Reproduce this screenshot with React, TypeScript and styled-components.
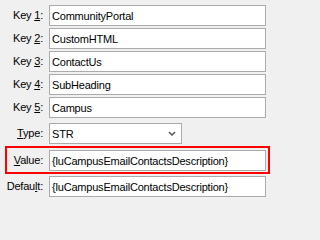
import React from 'react';
import styled, { createGlobalStyle } from 'styled-components';

const GlobalStyle = createGlobalStyle`
  html, body {
    margin: 0;
    padding: 0;
    background: #f0f0f0;
  }
`;

const Form = styled.div`
  width: 271px;
  height: 202px;
  box-sizing: border-box;
  padding: 5px 1px 0 5px;
  display: flex;
  flex-direction: column;
  font-family: 'Liberation Sans', Arial, sans-serif;
  font-size: 11px;
  letter-spacing: -0.2px;
  color: #000;
  background: #f0f0f0;
`;

const Row = styled.div<{ $highlight?: boolean; $gap?: number }>`
  display: grid;
  grid-template-columns: 36px 1fr;
  column-gap: 6px;
  align-items: center;
  border-style: solid;
  border-color: ${(p) => (p.$highlight ? '#ff0000' : 'transparent')};
  border-width: ${(p) => (p.$highlight ? '2px' : '0 2px')};
  padding: ${(p) => (p.$highlight ? '2px 2px 1px 0' : '0 2px 0 0')};
  margin-bottom: ${(p) => p.$gap ?? 2}px;
`;

const Label = styled.div`
  display: flex;
  justify-content: flex-end;
  white-space: pre;
  padding-bottom: 1px;
`;

const Key = styled.span`
  text-decoration: underline;
`;

const Field = styled.div<{ $width?: number }>`
  box-sizing: border-box;
  height: 21px;
  width: ${(p) => (p.$width ? `${p.$width}px` : '100%')};
  border: 1px solid #ababab;
  background: #fff;
  padding: 0 2px;
  display: flex;
  align-items: center;
  justify-content: space-between;
  white-space: nowrap;
  overflow: hidden;
`;

const Chevron = styled.svg`
  width: 8px;
  height: 5px;
  margin-right: 3px;
  flex: none;
`;

type Item = { key: string; value: string };

const keys: Item[] = [
  { key: '1', value: 'CommunityPortal' },
  { key: '2', value: 'CustomHTML' },
  { key: '3', value: 'ContactUs' },
  { key: '4', value: 'SubHeading' },
  { key: '5', value: 'Campus' },
];

const App = () => {
  return (
    <>
      <GlobalStyle />
      <Form>
        {keys.map((k, i) => (
          <Row key={k.key} $gap={i === keys.length - 1 ? 5 : 2}>
            <Label>
              <span>
                {'Key '}
                <Key>{k.key}</Key>:
              </span>
            </Label>
            <Field>{k.value}</Field>
          </Row>
        ))}
        <Row>
          <Label>
            <span>
              <Key>T</Key>ype:
            </span>
          </Label>
          <Field $width={133}>
            <span>STR</span>
            <Chevron viewBox="0 0 8 5">
              <path d="M1 1 L4 4 L7 1" fill="none" stroke="#606060" strokeWidth="1.6" />
            </Chevron>
          </Field>
        </Row>
        <Row $highlight>
          <Label>
            <span>
              <Key>V</Key>alue:
            </span>
          </Label>
          <Field>{'{luCampusEmailContactsDescription}'}</Field>
        </Row>
        <Row>
          <Label>
            <span>
              Defau<Key>l</Key>t:
            </span>
          </Label>
          <Field>{'{luCampusEmailContactsDescription}'}</Field>
        </Row>
      </Form>
    </>
  );
};

export default App;
